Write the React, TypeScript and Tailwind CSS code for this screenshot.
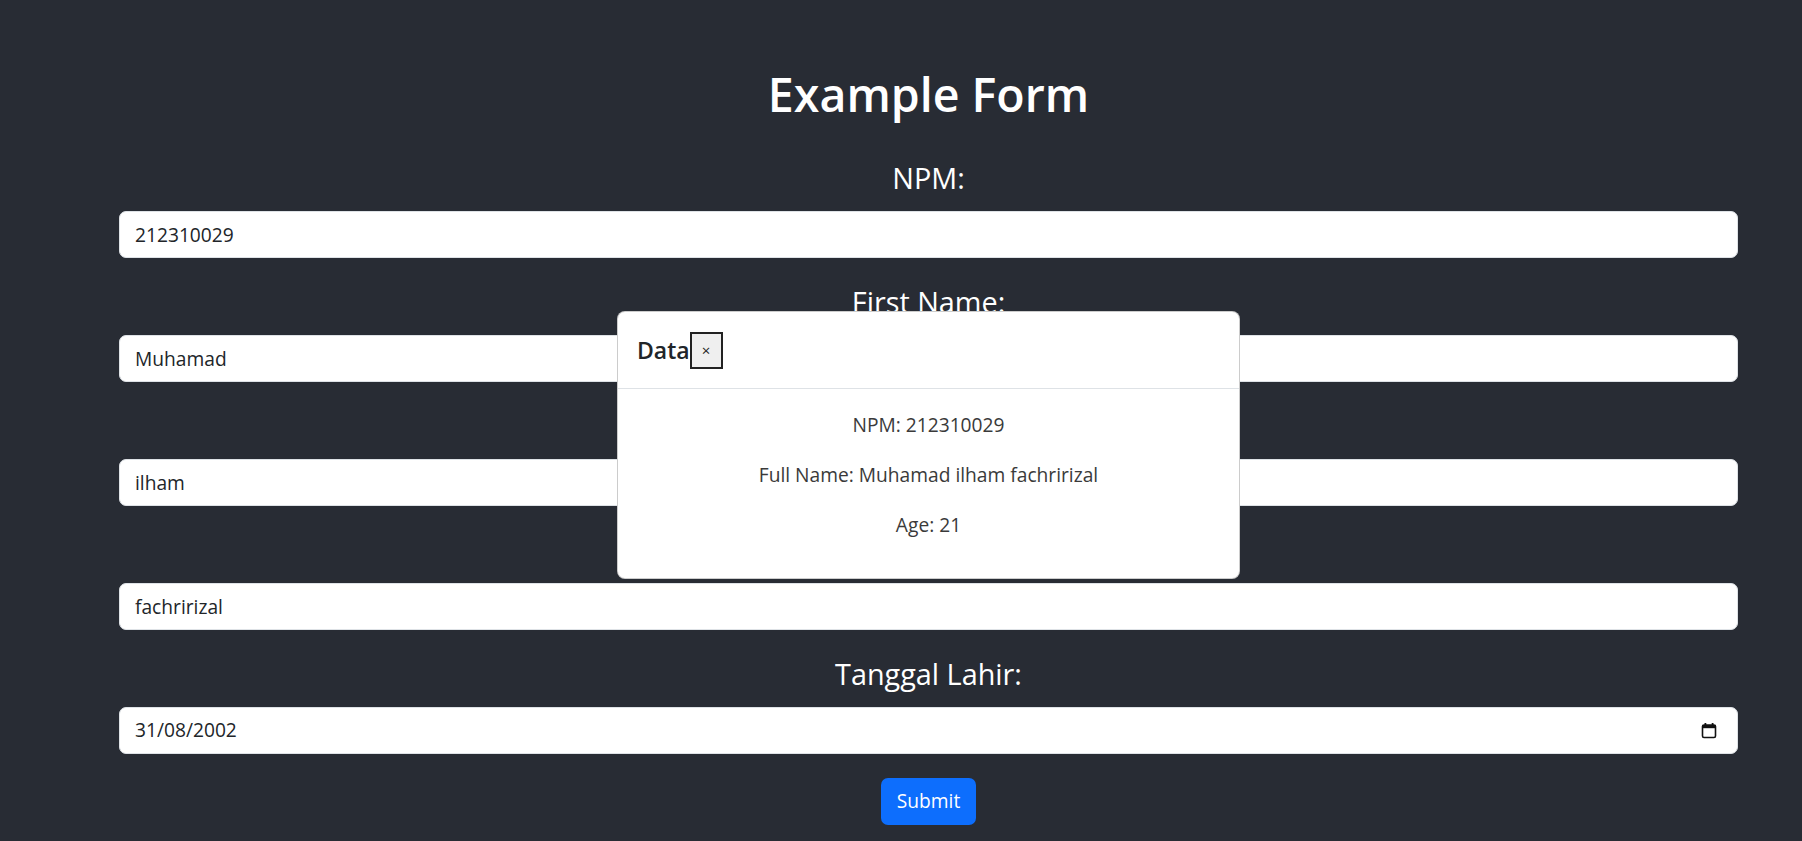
import { useState } from 'react'

const fields = [
    { label: 'NPM:', value: '212310029' },
    { label: 'First Name:', value: 'Muhamad' },
    { label: 'Middle Name:', value: 'ilham' },
    { label: 'Last Name:', value: 'fachririzal' },
]

function CalendarIcon() {
    return (
        <svg width="16" height="17" viewBox="0 0 16 17" className="shrink-0">
            <rect x="1.5" y="3" width="13" height="12.5" rx="1.5" fill="none" stroke="#111" strokeWidth="1.6" />
            <rect x="1.5" y="3" width="13" height="3.2" fill="#111" />
            <rect x="3.5" y="1" width="1.8" height="3" fill="#111" />
            <rect x="10.7" y="1" width="1.8" height="3" fill="#111" />
        </svg>
    )
}

export default function App() {
    const [showModal, setShowModal] = useState(true)

    return (
        <div
            className="relative h-[841px] w-full overflow-hidden bg-[#282c34]"
            style={{ fontFamily: '"Open Sans", "Noto Sans", sans-serif' }}
        >
            <div className="flex w-[1738px] flex-col items-center pl-[119px] pt-[66px]">
                <h1 className="mb-[33px] text-[46.5px] font-semibold leading-[57px] text-white">Example Form</h1>

                <form className="flex w-full flex-col gap-[22px]" onSubmit={(e) => e.preventDefault()}>
                    {fields.map((f) => (
                        <div key={f.label} className="flex flex-col items-center">
                            <label className="mb-[12px] text-[28.8px] leading-[43px] text-white">{f.label}</label>
                            <input
                                readOnly
                                value={f.value}
                                className="h-[47px] w-full rounded-[7px] border border-[#dee2e6] bg-white px-[15px] text-[19.2px] text-[#212529] outline-none"
                            />
                        </div>
                    ))}
                    <div className="flex flex-col items-center">
                        <label className="mb-[12px] text-[28.8px] leading-[43px] text-white">Tanggal Lahir:</label>
                        <div className="flex h-[47px] w-full items-center justify-between rounded-[7px] border border-[#dee2e6] bg-white pl-[15px] pr-[20px] text-[19.2px] text-[#212529]">
                            <span>31/08/2002</span>
                            <CalendarIcon />
                        </div>
                    </div>
                    <div className="mt-[2px] flex justify-center">
                        <button
                            type="submit"
                            className="h-[47px] w-[95px] rounded-[7px] bg-[#0d6efd] text-[19.2px] text-white"
                        >
                            Submit
                        </button>
                    </div>
                </form>
            </div>

            {showModal && (
                <div className="absolute left-[617px] top-[311px] w-[623px] rounded-[8px] border border-black/20 bg-white">
                    <div className="flex items-center border-b border-[#dee2e6] px-[19px] py-[19px]">
                        <h4 className="text-[23px] font-semibold leading-[38px] text-[#212529]">Data</h4>
                        <button
                            onClick={() => setShowModal(false)}
                            className="flex h-[37px] w-[33px] items-center justify-center border-2 border-[#222] bg-[#efefef] text-[15px] text-[#222]"
                        >
                            ×
                        </button>
                    </div>
                    <div className="px-[19px] pb-[18px] pt-[21px] text-center text-[19.2px] leading-[30px] text-[#3a3a3a]">
                        <p className="mb-[20px]">NPM: 212310029</p>
                        <p className="mb-[20px]">Full Name: Muhamad ilham fachririzal</p>
                        <p className="mb-[20px]">Age: 21</p>
                    </div>
                </div>
            )}
        </div>
    )
}
